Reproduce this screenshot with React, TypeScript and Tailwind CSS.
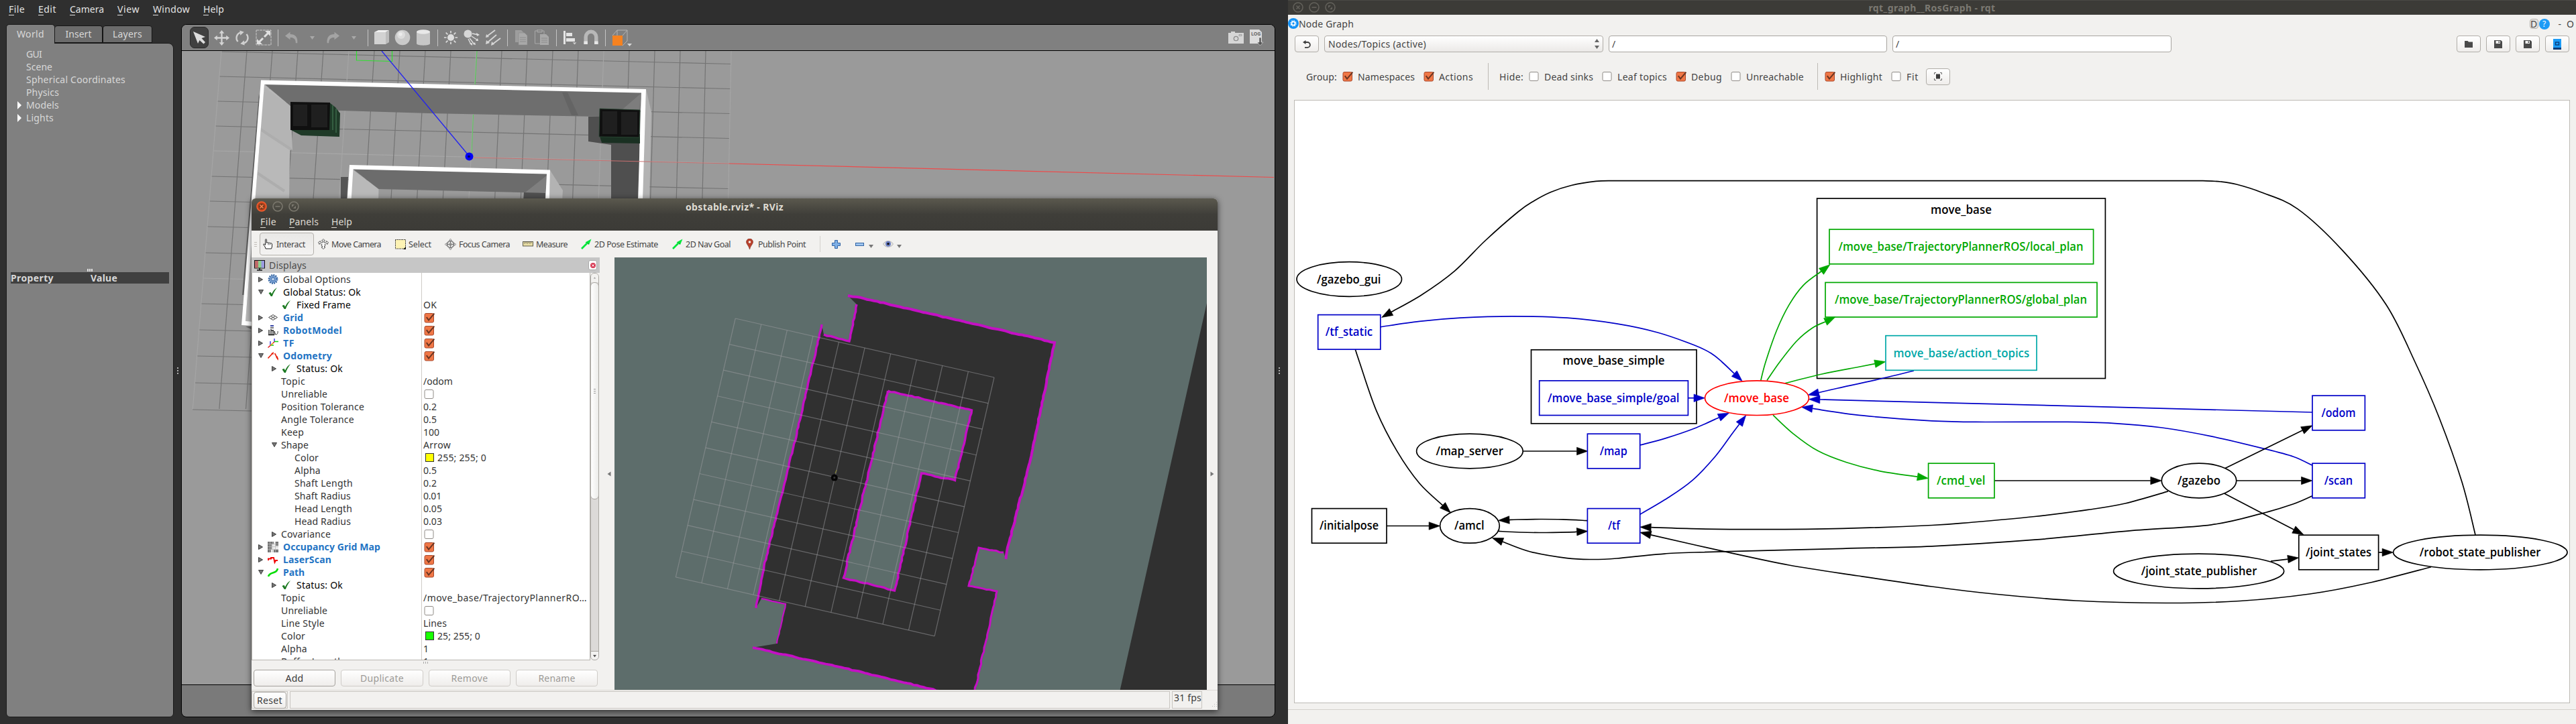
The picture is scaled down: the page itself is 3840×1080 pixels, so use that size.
import { useLayoutEffect, useRef, useState, type ReactNode } from "react";

/* ---------- text helpers ---------- */

/** Single-line label whose tracking is adjusted so that it spans `w` pixels. */
function T({ w, className = "", children }: { w?: number; className?: string; children: string }) {
  const ref = useRef<HTMLSpanElement>(null);
  const [ls, setLs] = useState(0);
  useLayoutEffect(() => {
    if (!w || !ref.current) return;
    const natural = ref.current.getBoundingClientRect().width;
    setLs((w - natural) / children.length);
  }, [w, children]);
  return (
    <span ref={ref} className={"inline-block whitespace-pre " + className} style={w ? { letterSpacing: ls } : undefined}>
      {children}
    </span>
  );
}

function MenuLabel({ w, children }: { w: number; children: string }) {
  return (
    <span className="relative inline-block h-[19px]">
      <T w={w}>{children}</T>
      <span className="absolute bottom-0 left-0 h-px w-2 bg-current" />
    </span>
  );
}

/* ---------- shared widgets ---------- */

function Check({ on, className = "" }: { on?: boolean; className?: string }) {
  return (
    <svg viewBox="0 0 17 16" className={"h-4 w-[17px] shrink-0 " + className}>
      {on ? (
        <>
          <rect x="1" y="1.5" width="13.5" height="13.5" rx="2" fill="#f07746" stroke="#a8492c" />
          <path d="M3.8 7.2 L7 11.6 L15.4 1.6" fill="none" stroke="#6b3522" strokeWidth="2" />
        </>
      ) : (
        <rect x="1" y="1.5" width="13" height="13" rx="2" fill="#fff" stroke="#8f8b86" />
      )}
    </svg>
  );
}

function Caret({ className = "" }: { className?: string }) {
  return (
    <svg viewBox="0 0 7 5" className={"h-[5px] w-[7px] shrink-0 " + className}>
      <path d="M0 0 H7 L3.5 5 Z" fill="currentColor" />
    </svg>
  );
}

/* ---------- Gazebo ---------- */

const rowsLeft = [77, 114, 151, 188, 225, 263, 300, 338, 377, 415, 453, 492, 531, 571, 611];
const cols = Array.from({ length: 21 }, (_, i) => 330 + i * 38);

function GazeboScene() {
  return (
    <svg viewBox="271 76 1629 945" className="block h-[945px] w-[1629px] bg-[#9a9a9a]">
      <g stroke="#7a7a7a" strokeWidth="1.2">
        {rowsLeft.map((y, i) => {
          const x = 330 - (y - 77) * 0.08;
          return <line key={i} x1={x} y1={y} x2={1090 - (y - 77) * 0.02} y2={y + 18.5} stroke={i === 4 || i === 9 ? "#a8a8a8" : "#747474"} />;
        })}
        {cols.map((x, i) => {
          const s = 0.08 - (i / 20) * 0.06;
          return <line key={i} x1={x} y1={76} x2={x - s * 534} y2={610} stroke={i % 5 === 0 ? "#a5a5a5" : "#747474"} />;
        })}
      </g>
      <path d="M531.5 76 V90 L584.5 91.5 V76" fill="none" stroke="#2fe22f" strokeWidth="1.2" />
      <path d="M711 76 L708 126" stroke="#4fd04f" strokeWidth="1" />

      {/* outer room */}
      <path d="M387 145 L384 180 L380 240 L375 330 L371 400 L367 440 L361 440 L386 140 Z" fill="#606060" />
      <path d="M963 133 L971 167 L968 300 L957 300 Z" fill="#b3b3b3" />
      <path d="M394 126 L433 158 L431 300 L375 480 L366 480 Z" fill="#b9b9b9" />
      <path d="M394 130 L388 194 L436 224 L433 158 Z" fill="#b4b4b4" />
      <path d="M387 192 L434 223 M382 257 L424 285" stroke="#adadad" strokeWidth="4" />
      <path d="M394 125 L957 137 L953 176 L893 174 L640 169 L506 165 L433 158 Z" fill="#6e6e6e" />
      <path d="M957 138 L953 164 L928 163 Z" fill="#7d7d7d" />
      <path d="M838 138 L852 172 L862 172 L846 138 Z" fill="#646464" />
      <path d="M877 174 L895 174 L897 213 L911 213 L953 213 L953 300 L911 300 L911 216 L877 211 Z" fill="#4f4f4f" />
      <path d="M389 119.5 L963 133 L958 300 L951 300 L956 138.5 L394 126 L366 479 L377 480 L377 486 L360 485 Z" fill="#fff" />
      <path d="M366 487 H376 V492 Z" fill="#666" />

      {/* inner room */}
      <path d="M508 264 L519 264 L517 300 L508 300 Z" fill="#555" />
      <path d="M820 254 L839 284 L838 300 L819 300 Z" fill="#b3b3b3" />
      <path d="M526 253 L564.5 282 L564 300 L523 300 Z" fill="#b9b9b9" />
      <path d="M526 252 L816 259 L813 288 L564.5 282 Z" fill="#6c6c6c" />
      <path d="M816 261 L813 288 L783 287 Z" fill="#7f7f7f" />
      <path d="M781 287 L813 288 V300 H780 Z" fill="#505050" />
      <path d="M521 246 L820 253.5 L819 300 L813 300 L815 259.5 L526.5 252.5 L523.5 300 L517.5 300 Z" fill="#fff" />

      {/* dumpsters */}
      <path d="M491 153 L500 160 L507 169 L506 204 L449 202 L434 194 Z" fill="#1f3a28" />
      <path d="M496 157 V194 M501 162 V198" stroke="#3c6a4a" strokeWidth="1.5" />
      <path d="M433 152 L492 153 L491 194 L433 194 Z" fill="#101010" />
      <path d="M437 156 H458 V188 H437 Z M464 156 H488 V190 H464 Z" fill="#1f1f1f" />
      <path d="M893 200 L897 213 L954 214 V200 Z" fill="#1a3022" />
      <path d="M894 162 L954 164 L953 205 L893 204 Z" fill="#101010" stroke="#2c4a36" strokeWidth="0.8" />
      <path d="M898 166 H920 V200 H898 Z M926 167 H950 V201 H926 Z" fill="#1f1f1f" />

      {/* axes and marker */}
      <path d="M705.5 171 L703 230" stroke="#5bcc5b" strokeWidth="1" />
      <path d="M706 235 L1087 244" stroke="#c97070" strokeWidth="1" />
      <path d="M1087 244 L1899 264.5" stroke="#ee4a4a" strokeWidth="1.2" />
      <path d="M569 76 L697 230" stroke="#2222f0" strokeWidth="1.3" />
      <ellipse cx="699.5" cy="233.5" rx="6" ry="6" fill="#0000f4" />
      <circle cx="699" cy="233.5" r="1.8" fill="#000060" />
    </svg>
  );
}

function ToolSep({ className = "" }: { className?: string }) {
  return <div className={"h-[25px] w-px shrink-0 bg-[#c4c4c4] " + className} />;
}

function Ico({ className, box = "0 0 24 24", children }: { className: string; box?: string; children: ReactNode }) {
  return (
    <svg viewBox={box} className={"shrink-0 " + className} fill="none">
      {children}
    </svg>
  );
}

function GazeboToolbar() {
  return (
    <div className="flex h-[39px] items-center border-b border-black bg-[#808080] text-[#bdbdbd]">
      <div className="ml-[12px] flex h-8 w-7 shrink-0 items-center justify-center rounded-[7px] border border-[#2a2a2a] bg-[#404040]">
        <Ico className="h-6 w-6">
          <path d="M3 3 L21 11 L15.5 13 L21 19 L18.5 21.5 L12.5 16 L10 21 Z" fill="#dcdcdc" />
        </Ico>
      </div>
      <Ico className="ml-[8px] h-[23px] w-[23px]">
        <path d="M12 0 L16 5 H13.2 V10.8 H19 V8 L24 12 L19 16 V13.2 H13.2 V19 H16 L12 24 L8 19 H10.8 V13.2 H5 V16 L0 12 L5 8 V10.8 H10.8 V5 H8 Z" fill="#d4d4d4" />
      </Ico>
      <Ico className="ml-[8px] h-[23px] w-[22px]">
        <path d="M5 18 A9 9 0 0 1 9 3.5 M19 6 A9 9 0 0 1 15 20.5" stroke="#d0d0d0" strokeWidth="2.6" />
        <path d="M8 0 L15 2.5 L9 8 Z M16 24 L9 21.5 L15 16 Z" fill="#d0d0d0" />
      </Ico>
      <Ico className="ml-[9px] h-[24px] w-[24px]">
        <rect x="1" y="1" width="22" height="22" stroke="#c8c8c8" strokeDasharray="4 1" />
        <path d="M13 11 L20 4 M11 13 L4 20" stroke="#e0e0e0" strokeWidth="3" />
        <path d="M14 2 H22 V10 Z M2 14 V22 H10 Z" fill="#e0e0e0" />
      </Ico>
      <ToolSep className="ml-[9px]" />
      <Ico className="ml-[8px] h-5 w-6">
        <path d="M0 9 L9 2 V6 C18 6 23 11 22 22 H19 C19 14 15 12 9 12 V16 Z" fill="#a4a4a4" />
      </Ico>
      <Caret className="ml-[15px] text-[#a8a8a8]" />
      <Ico className="ml-[15px] h-5 w-6">
        <path d="M24 9 L15 2 V6 C6 6 1 11 2 22 H5 C5 14 9 12 15 12 V16 Z" fill="#a4a4a4" />
      </Ico>
      <Caret className="ml-[16px] text-[#a8a8a8]" />
      <ToolSep className="ml-[17px]" />
      <Ico className="ml-[8px] h-6 w-6">
        <path d="M1 4 L7 1 H23 L18 4 Z" fill="#f0f0f0" />
        <path d="M1 4 H18 V22 H1 Z" fill="#d2d2d2" />
        <path d="M18 4 L23 1 V19 L18 22 Z" fill="#bcbcbc" />
      </Ico>
      <Ico className="ml-[7px] h-6 w-6">
        <circle cx="12" cy="12" r="11.3" fill="#c9c9c9" />
        <circle cx="10" cy="8" r="6" fill="#dcdcdc" />
        <circle cx="9" cy="7" r="2.6" fill="#ececec" />
      </Ico>
      <Ico className="ml-[9px] h-6 w-5" box="0 0 20 24">
        <path d="M0 3 V21 C0 24.500 20 24.500 20 21 V3 Z" fill="#c6c6c6" />
        <ellipse cx="10" cy="3.500" rx="10" ry="3.200" fill="#e8e8e8" />
      </Ico>
      <ToolSep className="ml-[11px]" />
      <Ico className="ml-[8px] h-6 w-[22px]">
        <circle cx="12" cy="12" r="5.500" fill="#dedede" />
        <path d="M12 5 V1 M12 19 V23 M5 12 H1 M19 12 H23 M7 7 L4 4 M17 7 L20 4 M7 17 L4 20 M17 17 L20 20" stroke="#dedede" strokeWidth="1.800" />
      </Ico>
      <Ico className="ml-[8px] h-6 w-6">
        <circle cx="6.500" cy="6.500" r="6" fill="#d6d6d6" />
        <path d="M13 6 L22 8 M12 10 L21 16 M9 13 L16 22 M7 14 L11 22" stroke="#dedede" strokeWidth="1.400" />
        <path d="M19 5 L24 8 L20 10 Z M18 17 L22 17 L21 13 Z M14 22 L18 23 L17 19 Z M9 21 L13 24 L13 20 Z" fill="#dedede" />
      </Ico>
      <Ico className="ml-[8px] h-6 w-6">
        <path d="M15 1 L3 10 M17 8 L3 20 M23 13 L11 22" stroke="#d6d6d6" strokeWidth="1.800" />
        <path d="M1 12 L2 7 L6 11 Z M1 22 L2 16 L7 20 Z M9 24 L10 18 L14 22 Z" fill="#d6d6d6" />
      </Ico>
      <ToolSep className="ml-[9px]" />
      <Ico className="ml-[11px] h-6 w-[19px]" box="0 0 19 24">
        <path d="M0 1 H9 L13 5 V19 H0 Z" fill="#9d9d9d" />
        <path d="M5 5 H14 L18 9 V23 H5 Z" fill="#a9a9a9" stroke="#8a8a8a" strokeWidth="0.600" />
        <path d="M7 12 H16 M7 15 H16 M7 18 H16" stroke="#8c8c8c" />
      </Ico>
      <Ico className="ml-[10px] h-6 w-[22px]" box="0 0 22 24">
        <path d="M0.500 2 H14 V21 H0.500 Z" stroke="#a9a9a9" />
        <path d="M4 0 H11 V4 H4 Z" fill="#8a8a8a" stroke="#a9a9a9" />
        <path d="M8 7 H17 L21 11 V23 H8 Z" fill="#a9a9a9" />
        <path d="M10 13 H19 M10 16 H19 M10 19 H19" stroke="#8c8c8c" />
      </Ico>
      <ToolSep className="ml-[10px]" />
      <Ico className="ml-[10px] h-6 w-[21px]" box="0 0 21 24">
        <path d="M0 2 H3 V22 H0 Z M4 5 H13 V10 H4 Z M4 13 H17 V18 H4 Z" fill="#e4e4e4" />
        <path d="M13 19 H20 L16.500 23 Z" fill="#d0d0d0" stroke="#808080" strokeWidth="0.800" />
      </Ico>
      <Ico className="ml-[9px] h-6 w-[22px]">
        <path d="M3.500 23 V11 A8.500 8.500 0 0 1 20.500 11 V23" stroke="#b8b8b8" strokeWidth="6" />
        <path d="M0.500 18 H6.500 V23 H0.500 Z M17.500 18 H23.500 V23 H17.500 Z" fill="#e6e6e6" />
      </Ico>
      <ToolSep className="ml-[10px]" />
      <Ico className="ml-[9px] h-[25px] w-[30px]" box="0 0 30 25">
        <path d="M8 1 H23 V17 L16 24 M16 9 L23 1 M1 9 L8 1 V9" stroke="#b4b4b4" />
        <rect x="1" y="9" width="15" height="15" fill="#f58220" />
        <path d="M23 21 H30 L26.500 25 Z" fill="#d8d8d8" />
      </Ico>
      <div className="flex-1" />
      <Ico className="h-[18px] w-[23px]" box="0 0 23 18">
        <path d="M0 2 H4 V0 H10 V2 H23 V18 H0 Z" fill="#d6d6d6" />
        <circle cx="11.500" cy="10.500" r="3.200" stroke="#8b8b8b" strokeWidth="1.300" />
        <path d="M16 4.500 H20 V6.500 H16 Z" stroke="#8b8b8b" strokeWidth="0.700" />
      </Ico>
      <div className="relative ml-[9px] mr-[16px] h-6 w-[21px] shrink-0">
        <Ico className="block h-6 w-[21px]" box="0 0 21 24">
          <path d="M0 0 H14 L18 4 V21 H0 Z" fill="#dcdcdc" />
          <path d="M14 12 H17 V19 H20 L15.500 24 L11 19 H14 Z" fill="#555" stroke="#e4e4e4" strokeWidth="0.600" />
        </Ico>
        <span className="absolute left-[2px] top-[3px] text-[7px] font-bold leading-[8px] text-[#666]">LOG</span>
      </div>
    </div>
  );
}

const worldTree: [string, number, boolean][] = [
  ["GUI", 23, false],
  ["Scene", 39, false],
  ["Spherical Coordinates", 148, false],
  ["Physics", 49, false],
  ["Models", 49, true],
  ["Lights", 41, true],
];

function Gazebo() {
  return (
    <div className="relative flex h-[1080px] w-[1920px] shrink-0 flex-col bg-[#2f2f2f] text-[14px] leading-[19px] text-[#d8d8d8]">
      <div className="flex h-9 shrink-0 items-start gap-[20px] pl-[13px] pt-[4px] text-[#e2e2e2]">
        <MenuLabel w={24}>File</MenuLabel>
        <MenuLabel w={27}>Edit</MenuLabel>
        <MenuLabel w={51}>Camera</MenuLabel>
        <MenuLabel w={33}>View</MenuLabel>
        <MenuLabel w={55}>Window</MenuLabel>
        <MenuLabel w={31}>Help</MenuLabel>
      </div>
      <div className="flex h-[1034px] shrink-0">
        <div className="ml-[9px] flex w-[250px] flex-col">
          <div className="flex h-[28px] shrink-0 items-end text-center">
            <div className="relative z-10 -mb-px h-[29px] w-[73px] rounded-t-[5px] border border-b-0 border-[#1a1a1a] bg-[#808080] pt-[4px]">
              <T w={41}>World</T>
            </div>
            <div className="h-[26px] w-[71px] rounded-t-[4px] border border-l-0 border-[#151515] bg-[#6b6b6b] pt-[2px]">
              <T w={39}>Insert</T>
            </div>
            <div className="h-[26px] w-[74px] rounded-t-[4px] border border-[#151515] bg-[#6b6b6b] pt-[2px]">
              <T w={44}>Layers</T>
            </div>
          </div>
          <div className="flex flex-1 flex-col rounded-b-[6px] rounded-tr-[8px] border border-[#1a1a1a] bg-[#808080]">
            <div className="h-[336px] pt-[6px]">
              {worldTree.map(([name, w, open]) => (
                <div key={name} className="flex h-[19px] items-center">
                  <span className="flex w-[29px] items-center pl-[16px]">
                    {open && (
                      <svg viewBox="0 0 6 12" className="h-3 w-1.5">
                        <path d="M0 0 L6 6 L0 12 Z" fill="#fff" />
                      </svg>
                    )}
                  </span>
                  <T w={w}>{name}</T>
                </div>
              ))}
            </div>
            <div className="flex h-[5px] justify-center gap-px">
              <span className="h-1 w-0.5 bg-[#e0e0e0]" />
              <span className="h-1 w-0.5 bg-[#e0e0e0]" />
              <span className="h-1 w-0.5 bg-[#e0e0e0]" />
            </div>
            <div className="mx-[6px] flex h-[17px] items-center bg-[#404040] font-bold">
              <div className="w-[119px]">
                <T w={64}>Property</T>
              </div>
              <T w={40}>Value</T>
            </div>
          </div>
        </div>
        <div className="flex w-[11px] flex-col items-center justify-center gap-[2px]">
          <span className="size-0.5 bg-[#b0b0b0]" />
          <span className="size-0.5 bg-[#b0b0b0]" />
          <span className="size-0.5 bg-[#b0b0b0]" />
        </div>
        <div className="w-[1631px] overflow-hidden rounded-[8px] border border-black bg-[#7a7a7a]">
          <GazeboToolbar />
          <GazeboScene />
          <div className="h-px bg-black" />
        </div>
        <div className="flex w-[11px] flex-col items-center justify-center gap-[2px]">
          <span className="size-0.5 bg-[#b0b0b0]" />
          <span className="size-0.5 bg-[#b0b0b0]" />
          <span className="size-0.5 bg-[#b0b0b0]" />
        </div>
      </div>
      <RViz />
    </div>
  );
}

/* ---------- RViz ---------- */

type Row = {
  n: string;
  w: number;
  lvl?: 0 | 1 | 2;
  arrow?: "r" | "d";
  icon?: string;
  kind?: "blue" | "black";
  v?: string;
  vw?: number;
  check?: boolean;
  color?: string;
};

const rows: Row[] = [
  { n: "Global Options", w: 101, arrow: "r", icon: "gear" },
  { n: "Global Status: Ok", w: 116, arrow: "d", icon: "ok", kind: "black" },
  { n: "Fixed Frame", w: 81, lvl: 1, icon: "ok", kind: "black", v: "OK", vw: 20 },
  { n: "Grid", w: 30, arrow: "r", icon: "grid", kind: "blue", check: true },
  { n: "RobotModel", w: 88, arrow: "r", icon: "robot", kind: "blue", check: true },
  { n: "TF", w: 17, arrow: "r", icon: "tf", kind: "blue", check: true },
  { n: "Odometry", w: 73, arrow: "d", icon: "odo", kind: "blue", check: true },
  { n: "Status: Ok", w: 69, lvl: 1, arrow: "r", icon: "ok", kind: "black" },
  { n: "Topic", w: 36, lvl: 1, v: "/odom", vw: 44 },
  { n: "Unreliable", w: 69, lvl: 1, check: false },
  { n: "Position Tolerance", w: 124, lvl: 1, v: "0.2", vw: 20 },
  { n: "Angle Tolerance", w: 109, lvl: 1, v: "0.5", vw: 20 },
  { n: "Keep", w: 34, lvl: 1, v: "100", vw: 24 },
  { n: "Shape", w: 41, lvl: 1, arrow: "d", v: "Arrow", vw: 41 },
  { n: "Color", w: 36, lvl: 2, v: "255; 255; 0", vw: 73, color: "bg-[#ffff00]" },
  { n: "Alpha", w: 39, lvl: 2, v: "0.5", vw: 20 },
  { n: "Shaft Length", w: 87, lvl: 2, v: "0.2", vw: 20 },
  { n: "Shaft Radius", w: 84, lvl: 2, v: "0.01", vw: 27 },
  { n: "Head Length", w: 86, lvl: 2, v: "0.05", vw: 28 },
  { n: "Head Radius", w: 84, lvl: 2, v: "0.03", vw: 28 },
  { n: "Covariance", w: 74, lvl: 1, arrow: "r", check: false },
  { n: "Occupancy Grid Map", w: 145, arrow: "r", icon: "map", kind: "blue", check: true },
  { n: "LaserScan", w: 72, arrow: "r", icon: "laser", kind: "blue", check: true },
  { n: "Path", w: 32, arrow: "d", icon: "path", kind: "blue", check: true },
  { n: "Status: Ok", w: 69, lvl: 1, arrow: "r", icon: "ok", kind: "black" },
  { n: "Topic", w: 36, lvl: 1, v: "/move_base/TrajectoryPlannerRO…", vw: 244 },
  { n: "Unreliable", w: 69, lvl: 1, check: false },
  { n: "Line Style", w: 65, lvl: 1, v: "Lines", vw: 35 },
  { n: "Color", w: 36, lvl: 1, v: "25; 255; 0", vw: 64, color: "bg-[#19ff00]" },
  { n: "Alpha", w: 39, lvl: 1, v: "1", vw: 7 },
  { n: "Buffer Length", w: 93, lvl: 1, v: "1", vw: 7 },
];

function RowIcon({ kind }: { kind: string }) {
  const c = "h-4 w-4 shrink-0";
  switch (kind) {
    case "gear":
      return (
        <Ico className={c} box="0 0 16 16">
          <circle cx="8" cy="7.500" r="6.200" stroke="#3465a4" strokeWidth="2.400" strokeDasharray="2 1.200" />
          <circle cx="8" cy="7.500" r="5.200" fill="#7ba3d6" stroke="#3465a4" strokeWidth="0.700" />
          <circle cx="8" cy="7.500" r="2.600" stroke="#3465a4" strokeWidth="1" fill="#b4cdea" />
        </Ico>
      );
    case "ok":
      return (
        <Ico className={c} box="0 0 16 16">
          <path d="M1.500 9 L4.500 7.800 L6 10.500 C8 6 10.500 3 14 1 C11 5 8.500 9 6.800 14 H4.800 Z" fill="#1c7a22" />
        </Ico>
      );
    case "grid":
      return (
        <Ico className={c} box="0 0 16 16">
          <path d="M1.500 7.500 L8 3.500 L14.500 7.500 L8 11.500 Z M4.700 5.500 L11.300 9.500 M11.300 5.500 L4.700 9.500" stroke="#444" strokeWidth="1" />
        </Ico>
      );
    case "robot":
      return (
        <Ico className={c} box="0 0 16 16">
          <rect x="4" y="0" width="5" height="2" fill="#3a49a8" />
          <rect x="4" y="3" width="5" height="2" fill="#777" />
          <path d="M2 7 V14 M5 6 V15 M8 7 V15 M10 9 L11 14 M5 8 H9" stroke="#333" strokeWidth="1.500" />
          <path d="M11 13 C13 16 16 12 15 9" stroke="#333" strokeWidth="1" />
          <path d="M1 14.500 H10" stroke="#111" strokeWidth="1.500" />
        </Ico>
      );
    case "tf":
      return (
        <Ico className={c} box="0 0 16 16">
          <path d="M10 6 V1 M4 11 V5" stroke="#2020e0" strokeWidth="1.300" />
          <path d="M10 5.500 H16 M4 11 H9" stroke="#10d010" strokeWidth="1.300" />
          <path d="M10 6 L0.500 14.500" stroke="#e01010" strokeWidth="1.300" />
          <path d="M4 11 L8 8" stroke="#e8c020" strokeWidth="1.200" />
        </Ico>
      );
    case "odo":
      return (
        <Ico className={c} box="0 0 16 16">
          <path d="M0.500 11.500 L7 4.500 M10.500 4 L15.500 13" stroke="#e8220c" strokeWidth="1.600" />
          <path d="M9 2 L8.500 6 L5 4.200 Z M15.800 15 L12 9.500 L15 8.500 Z" fill="#e8220c" />
        </Ico>
      );
    case "map":
      return (
        <Ico className={c} box="0 0 16 16">
          <rect width="16" height="16" fill="#eee" />
          <path d="M0 0 H9 V4 H6 V12 H5 V16 H0 Z M12 0 H16 V6 H12 Z M9 12 H16 V16 H9 Z" fill="#777" />
          <path d="M0 3.500 H16 M0 7.500 H16 M0 11.500 H16 M3.500 0 V16 M7.500 0 V16 M11.500 0 V16" stroke="#b8b8b8" strokeWidth="0.700" />
        </Ico>
      );
    case "laser":
      return (
        <Ico className={c} box="0 0 16 16">
          <path d="M1 9 V6.500 H5 V5 H9 L10.500 12 L12 9 H15" stroke="#f00000" strokeWidth="1.900" />
        </Ico>
      );
    default:
      return (
        <Ico className={c} box="0 0 16 16">
          <path d="M1 14 C3 6 13 11 15 2" stroke="#08dd08" strokeWidth="2.600" />
        </Ico>
      );
  }
}

function TreeRow({ r }: { r: Row }) {
  const pad = r.lvl === 2 ? "pl-[49px]" : r.lvl === 1 ? "pl-[29px]" : "pl-[9px]";
  const tone = r.kind === "blue" ? "font-bold text-[#1f74c4]" : r.kind === "black" ? "text-black" : "text-[#333]";
  return (
    <div className="flex h-[19px] shrink-0 items-center">
      <div className={"flex w-[252px] shrink-0 items-center " + pad}>
        <span className="flex w-[14px] shrink-0">
          {r.arrow === "r" && (
            <Ico className="h-2 w-[7px]" box="0 0 7 8">
              <path d="M0.500 0.500 L6.500 4 L0.500 7.500 Z" fill="#777" stroke="#3c3c3c" />
            </Ico>
          )}
          {r.arrow === "d" && (
            <Ico className="h-[7px] w-2" box="0 0 8 7">
              <path d="M0.500 0.500 H7.500 L4 6.500 Z" fill="#777" stroke="#3c3c3c" />
            </Ico>
          )}
        </span>
        {r.icon && (
          <span className="mr-[7px] flex shrink-0">
            <RowIcon kind={r.icon} />
          </span>
        )}
        <T w={r.w} className={tone}>
          {r.n}
        </T>
      </div>
      <div className="flex h-full w-[252px] items-center pl-[3px] text-[#333]">
        {r.check !== undefined && <Check on={r.check} className="ml-px" />}
        {r.color && <span className={"ml-[3px] mr-[5px] size-[13px] border border-[#333] " + r.color} />}
        {r.v && <T w={r.vw}>{r.v}</T>}
      </div>
    </div>
  );
}

function RvBtn({ children, w, className = "" }: { children: string; w: number; className?: string }) {
  return (
    <div className={"flex h-[25px] items-center justify-center rounded-[4px] border bg-linear-to-b from-white to-[#efedeb] " + className}>
      <T w={w}>{children}</T>
    </div>
  );
}

/** Roughens a polyline the way rasterised range readings look. */
function rough(points: number[][], amp: number) {
  let seed = 7;
  const rnd = () => {
    seed = (seed * 16807) % 2147483647;
    return seed / 2147483647 - 0.5;
  };
  const out: string[] = [];
  points.forEach((p, i) => {
    const q = points[i + 1];
    out.push(p[0] + " " + p[1]);
    if (!q) return;
    const len = Math.hypot(q[0] - p[0], q[1] - p[1]);
    const n = Math.floor(len / 5);
    for (let k = 1; k < n; k++) {
      const t = k / n;
      out.push((p[0] + (q[0] - p[0]) * t + rnd() * amp).toFixed(1) + " " + (p[1] + (q[1] - p[1]) * t + rnd() * amp).toFixed(1));
    }
  });
  return "M" + out.join(" L");
}

const right = [[1264, 441], [1278, 443], [1572, 511], [1535, 690], [1501, 822], [1499.5, 834]];
const notchR = [[1496, 824], [1459, 817], [1444, 874], [1486, 882], [1453, 1031]];
const bottomWall = [[1401, 1031], [1260, 997], [1122, 966]];
const notchBL = [[1158, 960], [1171, 901], [1135, 893]];
const leftWall = [[1127, 907], [1139, 844], [1190, 637], [1225, 484]];
const notchTL = [[1228, 499], [1266, 509], [1277, 454]];
const hole = [[1323.5, 583], [1448.5, 612], [1423.5, 716.5], [1373.5, 706], [1333.5, 881], [1257.5, 862], [1323.5, 583]];

function MapView() {
  const a = [1096.2, 475], b = [1482, 563], c = [1007.3, 860.8];
  const u = [(b[0] - a[0]) / 10, (b[1] - a[1]) / 10];
  const v = [(c[0] - a[0]) / 10, (c[1] - a[1]) / 10];
  const floor = [...right, ...notchR, ...bottomWall, ...notchBL, ...leftWall, ...notchTL];
  return (
    <svg viewBox="916 384 883 645" className="block h-[645px] w-[883px] shrink-0 bg-[#5d6d6b]">
      <path d="M1799 452 L1669.700 1029 H1799 Z" fill="#303030" />
      <path d={"M" + floor.map((p) => p.join(" ")).join(" L") + " Z M" + hole.map((p) => p.join(" ")).join(" L") + " Z"} fill="#303030" fillRule="evenodd" />
      <g fill="none" stroke="#c410c4" strokeWidth="3">
        <path d={rough(right, 1.2)} strokeWidth="4" />
        <path d={rough(notchR, 1.6)} strokeWidth="3" />
        <path d={rough(bottomWall, 1.4)} strokeWidth="3.800" />
        <path d={rough(notchBL, 1.2)} strokeWidth="2.200" />
        <path d={rough(leftWall, 1.3)} strokeWidth="3.400" />
        <path d={rough(notchTL, 1.4)} strokeWidth="3.400" />
        <path d={rough(hole, 1.6)} strokeWidth="3.400" />
      </g>
      <g stroke="#a0a0a4" strokeOpacity="0.5" strokeWidth="1.200">
        {Array.from({ length: 11 }, (_, i) => (
          <g key={i}>
            <line x1={a[0] + u[0] * i} y1={a[1] + u[1] * i} x2={c[0] + u[0] * i} y2={c[1] + u[1] * i} />
            <line x1={a[0] + v[0] * i} y1={a[1] + v[1] * i} x2={b[0] + v[0] * i} y2={b[1] + v[1] * i} />
          </g>
        ))}
      </g>
      <path d="M1245 706 L1247 701" stroke="#8a8a30" />
      <circle cx="1243.800" cy="712.600" r="5" fill="#050505" />
      <circle cx="1243.800" cy="712.600" r="1.500" fill="#3a3a3a" />
    </svg>
  );
}

function GreenArrow({ className }: { className: string }) {
  return (
    <Ico className={className} box="0 0 16 16">
      <path d="M1 15 L9 7" stroke="#00e83a" strokeWidth="2.600" />
      <path d="M15.500 0.500 L12 9 L6.500 5.500 Z" fill="#00e83a" />
      <path d="M8 5 L11 8.500 L12 8 L7.500 4.500 Z" fill="#0a8a26" />
    </Ico>
  );
}

function RVizToolbar() {
  return (
    <div className="flex h-10 shrink-0 items-center bg-[#f2f1ef] text-[12.5px] text-[#444]">
      <div className="ml-[4px] flex w-[4px] flex-col gap-[2px]">
        <span className="h-px bg-[#c0bdb8]" />
        <span className="h-px bg-[#c0bdb8]" />
        <span className="h-px bg-[#c0bdb8]" />
      </div>
      <div className="ml-[4px] flex h-[34px] w-[81px] items-center rounded-[4px] border border-[#b3b0ab] bg-linear-to-b from-[#e9e8e6] to-[#f4f3f2] pl-[4px]">
        <Ico className="mr-[4px] h-4 w-4" box="0 0 16 16">
          <path d="M4 15 L3 12 L0.800 9 C0.500 7.500 2 7.500 3.500 9.500 V1.800 C3.500 0.300 5.500 0.300 5.500 1.800 V6.500 C6 5.300 8 5.500 8 6.700 C8.500 5.700 10.500 6 10.500 7.200 C11 6.300 13 6.500 13.500 8 V12 L12.500 15 Z" fill="#fff" stroke="#222" />
          <path d="M8 7 V9.500 M10.500 7.500 V9.500" stroke="#222" strokeWidth="0.800" />
        </Ico>
        <T w={43}>Interact</T>
      </div>
      <Ico className="ml-[6px] mr-[4px] h-4 w-4" box="0 0 16 16">
        <path d="M8 0.500 L10.500 3 H9 V6 L13 5 L12.500 3.500 L15.500 5.500 L14 8.500 L13.500 7 L10 8.500 L11 11 H9.500 V13 H11 L8 15.500 L5 13 H6.500 V11 H5 L6 8.500 L2.500 7 L2 8.500 L0.500 5.500 L3.500 3.500 L3 5 L7 6 V3 H5.500 Z" fill="#fafafa" stroke="#555" strokeWidth="0.900" />
      </Ico>
      <div className="w-[95px]"><T w={74}>Move Camera</T></div>
      <Ico className="mr-[4px] h-[15px] w-4" box="0 0 16 15">
        <rect x="0.500" y="0.500" width="15" height="13.500" fill="#fdf3b4" stroke="#222" strokeDasharray="1.500 1" />
        <path d="M12 15 H16 V11 Z" fill="#111" />
      </Ico>
      <div className="w-[54px]"><T w={34}>Select</T></div>
      <Ico className="mr-[4px] h-[17px] w-[17px]" box="0 0 17 17">
        <circle cx="8.500" cy="8.500" r="5" stroke="#777" strokeWidth="1.500" />
        <circle cx="8.500" cy="8.500" r="2.200" stroke="#999" strokeWidth="1" />
        <path d="M8.500 0 L10.500 3 H6.500 Z M8.500 17 L10.500 14 H6.500 Z M0 8.500 L3 6.500 V10.500 Z M17 8.500 L14 6.500 V10.500 Z" fill="#eee" stroke="#777" strokeWidth="0.700" />
        <path d="M8.500 4 V13 M4 8.500 H13" stroke="#777" />
      </Ico>
      <div className="w-[95px]"><T w={76}>Focus Camera</T></div>
      <Ico className="mr-[4px] h-2 w-4" box="0 0 16 8">
        <rect x="0.500" y="0.500" width="15" height="6.500" fill="#eadfa6" stroke="#5c5a4a" />
        <path d="M3 1 V4 M5 1 V3 M7 1 V4 M9 1 V3 M11 1 V4 M13 1 V3" stroke="#5c5a4a" strokeWidth="0.700" />
      </Ico>
      <div className="w-[67px]"><T w={47}>Measure</T></div>
      <GreenArrow className="mr-[4px] h-4 w-4" />
      <div className="w-[116px]"><T w={95}>2D Pose Estimate</T></div>
      <GreenArrow className="mr-[4px] h-4 w-4" />
      <div className="w-[90px]"><T w={67}>2D Nav Goal</T></div>
      <Ico className="mr-[7px] h-4 w-[11px]" box="0 0 11 16">
        <path d="M5.500 16 C4.500 11 0.500 8 0.500 5 A5 5 0 0 1 10.500 5 C10.500 8 6.500 11 5.500 16 Z" fill="#b9402c" stroke="#7a2a1c" strokeWidth="0.600" />
        <circle cx="5.500" cy="5" r="1.800" fill="#f6f0ea" />
      </Ico>
      <div className="w-[92px]"><T w={71}>Publish Point</T></div>
      <div className="h-6 w-px bg-[#d4d1cc]" />
      <Ico className="ml-[17px] h-[13px] w-[13px]" box="0 0 13 13">
        <path d="M4.500 0.500 H8.500 V4.500 H12.500 V8.500 H8.500 V12.500 H4.500 V8.500 H0.500 V4.500 H4.500 Z" fill="#7fb0e6" stroke="#3465a4" />
      </Ico>
      <Ico className="ml-[22px] h-[5px] w-[13px]" box="0 0 13 5">
        <rect x="0.500" y="0.500" width="12" height="4" fill="#9ec4ee" stroke="#3465a4" />
      </Ico>
      <Caret className="ml-[7px] mt-[7px] text-[#777]" />
      <Ico className="ml-[14px] h-[12px] w-4" box="0 0 16 12">
        <path d="M0.500 6 C4 0 12 0 15.500 6 C12 12 4 12 0.500 6 Z" fill="#e4e4e2" stroke="#aaa" strokeWidth="0.800" />
        <circle cx="8" cy="5.800" r="4" fill="#6c7fc4" />
        <circle cx="8" cy="5.800" r="1.800" fill="#111" />
      </Ico>
      <Caret className="ml-[5px] mt-[7px] text-[#777]" />
    </div>
  );
}

function WinButton({ glyph, close, dim }: { glyph: "x" | "-" | "m"; close?: boolean; dim?: boolean }) {
  const s = close ? "#f0602f" : dim ? "#63615b" : "#7b786e";
  return (
    <Ico className="size-4" box="0 0 16 16">
      <circle cx="8" cy="8" r="7" stroke={s} strokeWidth="1.600" fill={close ? "#c8421d" : "none"} />
      {close && <circle cx="8" cy="8" r="4.600" fill="#7a3a1a" />}
      {glyph === "x" && <path d="M5.500 5.500 L10.500 10.500 M10.500 5.500 L5.500 10.500" stroke={close ? "#f5824f" : s} strokeWidth="1.600" />}
      {glyph === "-" && <path d="M4.500 8 H11.500" stroke={s} strokeWidth="1.600" />}
      {glyph === "m" && <path d="M5 5 H9 L5 9 Z M11 11 H7 L11 7 Z" fill={s} />}
    </Ico>
  );
}

function RViz() {
  return (
    <div className="absolute left-[375px] top-[296px] flex h-[763px] w-[1440px] flex-col overflow-hidden rounded-t-[6px] bg-[#f2f1ef] shadow-[0_2px_10px_rgba(0,0,0,0.65)]">
      <div className="h-12 shrink-0 bg-linear-to-b from-[#5b594e] via-[#3f3e39] via-50% to-[#3c3b37] text-[#dfdbd2]">
        <div className="relative flex h-6 items-center justify-center">
          <div className="absolute left-[7px] top-[4px] flex gap-2">
            <WinButton glyph="x" close />
            <WinButton glyph="-" />
            <WinButton glyph="m" />
          </div>
          <T w={146} className="font-bold">obstable.rviz* - RViz</T>
        </div>
        <div className="flex items-start gap-[19px] pl-[13px] pt-px">
          <MenuLabel w={24}>File</MenuLabel>
          <MenuLabel w={44}>Panels</MenuLabel>
          <MenuLabel w={31}>Help</MenuLabel>
        </div>
      </div>
      <RVizToolbar />
      <div className="flex h-[645px] shrink-0">
        <div className="flex w-[519px] shrink-0 flex-col text-[#4c4c4c]">
          <div className="flex h-[23px] shrink-0 items-center bg-[#c6c6c6] pl-[4px] pr-[4px]">
            <Ico className="mr-[6px] h-4 w-4" box="0 0 16 16">
              <rect x="0.500" y="0.500" width="15" height="11.500" fill="#8ed08e" stroke="#111" />
              <rect x="1" y="1" width="5" height="10.500" fill="#c06a6a" />
              <rect x="10.500" y="1" width="4.500" height="10.500" fill="#9a9ae0" />
              <path d="M8 12 V14.500 M4 15 H12" stroke="#111" strokeWidth="1.500" />
            </Ico>
            <T w={56}>Displays</T>
            <span className="ml-auto flex h-[15px] w-[13px] items-center justify-center rounded-[3px] border border-[#aaa] bg-white">
              <Ico className="h-2 w-2" box="0 0 8 8">
                <circle cx="4" cy="4" r="4" fill="#d8405a" />
                <path d="M2.500 2.500 L5.500 5.500 M5.500 2.500 L2.500 5.500" stroke="#fff" />
              </Ico>
            </span>
          </div>
          <div className="flex h-[578px] shrink-0">
            <div className="relative h-full w-[505px] overflow-hidden border border-t-0 border-[#b8b5b0] bg-white">
              {rows.map((r, i) => (
                <TreeRow key={i} r={r} />
              ))}
              <span className="absolute left-[252px] top-0 h-full w-px bg-[#cfccc8]" />
            </div>
            <div className="flex w-[13px] flex-col overflow-hidden rounded-[6px] border border-[#aaa7a2] bg-[#dcdad8]">
              <div className="flex h-[13px] shrink-0 items-center justify-center bg-[#f2f1ef]">
                <Caret className="rotate-180 scale-50 text-[#999]" />
              </div>
              <div className="-mx-px flex h-[324px] shrink-0 flex-col items-center justify-center gap-[2px] rounded-[6px] border border-[#aaa7a2] bg-linear-to-r from-white to-[#ececea]">
                <span className="h-px w-[3px] bg-[#999]" />
                <span className="h-px w-[3px] bg-[#999]" />
                <span className="h-px w-[3px] bg-[#999]" />
              </div>
              <div className="mt-auto flex h-[13px] shrink-0 items-center justify-center border-t border-[#aaa7a2] bg-[#f4f3f1]">
                <Caret className="scale-75 text-[#555]" />
              </div>
            </div>
          </div>
          <div className="flex h-[14px] shrink-0 justify-center gap-[2px] pt-[2px]">
            <span className="h-[3px] w-px bg-[#aaa]" />
            <span className="h-[3px] w-px bg-[#aaa]" />
            <span className="h-[3px] w-px bg-[#aaa]" />
          </div>
          <div className="flex gap-[8px] pl-[3px]">
            <RvBtn w={27} className="w-[122px] border-[#a5a29d] text-[#3c3c3c]">Add</RvBtn>
            <RvBtn w={65} className="w-[123px] border-[#cfccc8] text-[#9c9a97]">Duplicate</RvBtn>
            <RvBtn w={55} className="w-[122px] border-[#cfccc8] text-[#9c9a97]">Remove</RvBtn>
            <RvBtn w={55} className="w-[122px] border-[#cfccc8] text-[#9c9a97]">Rename</RvBtn>
          </div>
        </div>
        <div className="flex w-[22px] items-center justify-end pr-[5px]">
          <Ico className="h-2 w-1.5" box="0 0 6 8">
            <path d="M5.500 0.500 V7.500 L0.500 4 Z" fill="#777" />
          </Ico>
        </div>
        <MapView />
        <div className="flex w-4 items-center justify-center">
          <Ico className="h-2 w-1.5" box="0 0 6 8">
            <path d="M0.500 0.500 V7.500 L5.500 4 Z" fill="#777" />
          </Ico>
        </div>
      </div>
      <div className="flex flex-1 gap-[3px] border-t border-[#dcdad6] pt-[1px] text-[#3c3c3c]">
        <div className="flex h-[26px] w-[54px] items-center justify-center border border-[#c9c6c1]">
          <RvBtn w={38} className="h-[23px] w-[49px] border-[#a5a29d]">Reset</RvBtn>
        </div>
        <div className="h-[26px] w-[1312px] border border-[#c9c6c1]" />
        <div className="h-[26px] w-[45px] border border-[#c9c6c1] pl-[2px] text-[14px] leading-[18px]">
          <T w={41}>31 fps</T>
        </div>
        <Ico className="ml-auto mt-[16px] h-2.5 w-3" box="0 0 12 10">
          <path d="M10 0 h1 v1 h-1 z M7 3 h1 v1 h-1 z M10 3 h1 v1 h-1 z M4 6 h1 v1 h-1 z M7 6 h1 v1 h-1 z M10 6 h1 v1 h-1 z" fill="#bbb" />
        </Ico>
      </div>
    </div>
  );
}

/* ---------- rqt_graph ---------- */

const K = "#000000", B = "#0000c8", G = "#00a800", C = "#00a8a8", R = "#ff0000";

type Node = { s: "e" | "r"; x1: number; x2: number; y: number; c: string; t: string; tx: number; tw: number };
const nodes: Node[] = [
  { s: "e", x1: 1933, x2: 2089.5, y: 416.5, c: K, t: "/gazebo_gui", tx: 1963, tw: 95.5 },
  { s: "r", x1: 1964.7, x2: 2057.8, y: 495.4, c: B, t: "/tf_static", tx: 1975.7, tw: 70.5 },
  { s: "r", x1: 1955.5, x2: 2067, y: 784.4, c: K, t: "/initialpose", tx: 1967, tw: 88 },
  { s: "e", x1: 2146.6, x2: 2235.3, y: 784.4, c: K, t: "/amcl", tx: 2168, tw: 44.5 },
  { s: "e", x1: 2111.6, x2: 2270.2, y: 673, c: K, t: "/map_server", tx: 2140.4, tw: 100.5 },
  { s: "r", x1: 2366.4, x2: 2444.7, y: 673, c: B, t: "/map", tx: 2384.7, tw: 41 },
  { s: "r", x1: 2366.4, x2: 2444.7, y: 784.4, c: B, t: "/tf", tx: 2397, tw: 18 },
  { s: "r", x1: 2294.7, x2: 2516.4, y: 593.7, c: B, t: "/move_base_simple/goal", tx: 2307, tw: 196.5 },
  { s: "e", x1: 2541.5, x2: 2696.4, y: 593.7, c: R, t: "/move_base", tx: 2570, tw: 97 },
  { s: "r", x1: 2727, x2: 3120.6, y: 368, c: G, t: "/move_base/TrajectoryPlannerROS/local_plan", tx: 2740.5, tw: 365 },
  { s: "r", x1: 2721, x2: 3126, y: 447.2, c: G, t: "/move_base/TrajectoryPlannerROS/global_plan", tx: 2735, tw: 376 },
  { s: "r", x1: 2811, x2: 3036, y: 526.5, c: C, t: "move_base/action_topics", tx: 2822.6, tw: 202.5 },
  { s: "r", x1: 2874.6, x2: 2973, y: 717, c: G, t: "/cmd_vel", tx: 2887, tw: 72.6 },
  { s: "e", x1: 3222.3, x2: 3333.7, y: 717, c: K, t: "/gazebo", tx: 3246, tw: 64 },
  { s: "r", x1: 3447, x2: 3525.4, y: 616, c: B, t: "/odom", tx: 3460.5, tw: 51 },
  { s: "r", x1: 3447, x2: 3525.4, y: 717, c: B, t: "/scan", tx: 3464.7, tw: 42.5 },
  { s: "r", x1: 3426.8, x2: 3545.6, y: 824, c: K, t: "/joint_states", tx: 3437, tw: 98 },
  { s: "e", x1: 3150.6, x2: 3404.7, y: 852, c: K, t: "/joint_state_publisher", tx: 3191.7, tw: 172.6 },
  { s: "e", x1: 3567.6, x2: 3827, y: 824, c: K, t: "/robot_state_publisher", tx: 3606.8, tw: 180.6 },
];

type Edge = { c: string; p: number[][]; open?: boolean };
const edges: Edge[] = [
  { c: K, open: true, p: [[3690, 798], [3670, 719], [3636, 623], [3600, 540], [3557, 454.5], [3492, 373.6], [3425, 311.6], [3370, 286.5], [3334, 275], [3310, 271], [3284, 269.6]] },
  { c: K, open: true, p: [[3284, 269.6], [2404, 269.6]] },
  { c: K, p: [[2404, 269.6], [2379, 270.4], [2342.5, 276.5], [2312, 286.5], [2287, 299.5], [2263, 316], [2214, 359], [2168, 404.6], [2119, 440], [2059.6, 473.5]] },
  { c: B, p: [[2057.8, 487.7], [2116, 479.4], [2177, 474.2], [2253.7, 471.8], [2336, 474.2], [2410, 482.9], [2471, 496], [2526, 515], [2550.7, 527], [2567, 540], [2597.2, 568.6]] },
  { c: K, p: [[2020.4, 521.4], [2026.5, 540], [2051.6, 612.3], [2082.3, 672.6], [2116, 721], [2162.5, 765]] },
  { c: K, p: [[2067, 784.5], [2146.6, 784.5]] },
  { c: K, p: [[2366.4, 776.6], [2330, 774.9], [2296.6, 774.5], [2262, 775], [2233.5, 776.3]] },
  { c: K, p: [[2233.5, 792.4], [2265, 794], [2296.6, 794.5], [2340, 793.8], [2367, 792.4]] },
  { c: K, p: [[2270.2, 673], [2367, 673]] },
  { c: B, p: [[2444.7, 664], [2483.3, 653.6], [2526, 639], [2577.6, 616]] },
  { c: B, p: [[2444.7, 767.3], [2486.4, 742.5], [2523, 716.3], [2556.8, 681], [2581.3, 648], [2602.7, 619.6]] },
  { c: B, p: [[2516.4, 593.7], [2541.5, 593.7]] },
  { c: K, p: [[3232, 732.9], [3167.8, 751], [3112.7, 760.4], [3033, 770.5], [2941, 779], [2880, 783.5], [2746.6, 788.4], [2624, 789.7], [2532, 788.9], [2444.7, 786.2]] },
  { c: K, p: [[3447, 739.8], [3418.8, 751.8], [3373, 765.6], [3296.4, 782.8], [3174, 791.8], [3033, 805.2], [2880, 814.8], [2746.6, 818.3], [2526, 824], [2471, 826.9], [2410, 833], [2373, 834.5], [2336, 832.7], [2281, 823], [2224.3, 802.4]] },
  { c: K, p: [[3624, 845.8], [3529, 870], [3443.3, 886], [3339, 896.5], [3229, 899.5], [3094, 896], [2972, 886], [2880, 875], [2770, 859], [2667, 843], [2569, 822.4], [2444.7, 794.2]] },
  { c: G, p: [[2624.8, 567.5], [2632, 540], [2648.6, 492.5], [2667, 454.6], [2688.4, 425.3], [2728, 394.7]] },
  { c: G, p: [[2634, 567.5], [2653, 540], [2679, 508], [2702, 489], [2736, 472.8]] },
  { c: G, p: [[2661, 571.7], [2716, 558], [2770, 547.5], [2811, 539.5]] },
  { c: B, p: [[2853, 553], [2795.6, 566.9], [2740, 579], [2695, 589.3]] },
  { c: B, p: [[3447, 615], [2880, 600.3], [2696.4, 595.6]] },
  { c: B, p: [[3447, 694.3], [3418.8, 681.2], [3373, 668.8], [3296.4, 650.9], [3223, 638], [3149.4, 631.3], [3082, 629.3], [2959.6, 629.5], [2880, 627.8], [2777, 619.9], [2685.4, 607.2]] },
  { c: G, p: [[2643, 619.2], [2673, 646.8], [2710, 672.6], [2752.7, 689.8], [2801.7, 702.6], [2874.6, 713.6]] },
  { c: K, p: [[2973, 717], [3222.3, 717]] },
  { c: K, p: [[3333.7, 717], [3447, 717]] },
  { c: K, p: [[3317, 698.4], [3447, 634.7]] },
  { c: K, p: [[3316, 736.3], [3434, 797.6]] },
  { c: K, p: [[3385, 837.2], [3426.8, 832]] },
  { c: K, p: [[3545.6, 824], [3567.6, 824]] },
];

/** Catmull-Rom spline through the given points, as cubic segments. */
function spline(p: number[][]) {
  let d = "M" + p[0].join(" ");
  for (let i = 0; i < p.length - 1; i++) {
    const a = p[i - 1] ?? p[i], b = p[i], c = p[i + 1], e = p[i + 2] ?? c;
    d += ` C${b[0] + (c[0] - a[0]) / 6} ${b[1] + (c[1] - a[1]) / 6} ${c[0] - (e[0] - b[0]) / 6} ${c[1] - (e[1] - b[1]) / 6} ${c[0]} ${c[1]}`;
  }
  return d;
}

function EdgeShape({ e }: { e: Edge }) {
  const pts = e.p.map((q) => [...q]);
  const tip = pts[pts.length - 1];
  const prev = pts[pts.length - 2];
  if (e.open) return <path d={spline(pts)} fill="none" stroke={e.c} strokeWidth="1.700" />;
  const len = Math.hypot(tip[0] - prev[0], tip[1] - prev[1]);
  const ux = (tip[0] - prev[0]) / len, uy = (tip[1] - prev[1]) / len;
  const bx = tip[0] - ux * 16.5, by = tip[1] - uy * 16.5;
  pts[pts.length - 1] = [bx, by];
  return (
    <g>
      <path d={spline(pts)} fill="none" stroke={e.c} strokeWidth="1.700" />
      <path d={`M${tip[0]} ${tip[1]} L${bx - uy * 5.8} ${by + ux * 5.8} L${bx + uy * 5.8} ${by - ux * 5.8} Z`} fill={e.c} stroke={e.c} strokeWidth="0.600" />
    </g>
  );
}

function GLabel({ x, y, w, c, children }: { x: number; y: number; w: number; c: string; children: string }) {
  return (
    <text x={x} y={y} textLength={w} lengthAdjust="spacingAndGlyphs" fill={c} className="text-[17.5px] font-semibold">
      {children}
    </text>
  );
}

function Graph() {
  return (
    <svg viewBox="1930 150 1900 898" className="block h-[898px] w-[1900px] bg-white font-['Open_Sans','Noto_Sans',sans-serif]">
      <rect x="2282.500" y="521.800" width="246.500" height="110" fill="none" stroke={K} strokeWidth="1.700" />
      <rect x="2708.600" y="296" width="429.800" height="268.500" fill="none" stroke={K} strokeWidth="1.700" />
      <GLabel x={2329.6} y={543.5} w={152} c={K}>move_base_simple</GLabel>
      <GLabel x={2878} y={318.500} w={91} c={K}>move_base</GLabel>
      {edges.map((e, i) => (
        <EdgeShape key={i} e={e} />
      ))}
      {nodes.map((n) => (
        <g key={n.t}>
          {n.s === "e" ? (
            <ellipse cx={(n.x1 + n.x2) / 2} cy={n.y} rx={(n.x2 - n.x1) / 2} ry={25.8} fill="none" stroke={n.c} strokeWidth="1.700" />
          ) : (
            <rect x={n.x1} y={n.y - 25.8} width={n.x2 - n.x1} height={51.6} fill="none" stroke={n.c} strokeWidth="1.700" />
          )}
          <GLabel x={n.tx} y={n.y + 6} w={n.tw} c={n.c}>{n.t}</GLabel>
        </g>
      ))}
    </svg>
  );
}

function RqtBtn({ children, className = "" }: { children: ReactNode; className?: string }) {
  return (
    <div className={"flex h-[25px] w-9 shrink-0 items-center justify-center rounded-[4px] border border-[#b0ada8] bg-linear-to-b from-white to-[#efedeb] " + className}>
      {children}
    </div>
  );
}

function Floppy() {
  return (
    <Ico className="h-3 w-3" box="0 0 12 12">
      <path d="M0 0 H10 L12 2 V12 H0 Z" fill="#4a4a4a" />
      <path d="M2.500 1 H9 V5 H2.500 Z" fill="#f4f4f4" />
      <path d="M6.500 1.500 H8 V4 H6.500 Z" fill="#4a4a4a" />
    </Ico>
  );
}

function Opt({ on, cell, w, children }: { on?: boolean; cell: string; w: number; children: string }) {
  return (
    <div className={"flex shrink-0 items-center " + cell}>
      <Check on={on} className="mr-[6px]" />
      <T w={w}>{children}</T>
    </div>
  );
}

function Rqt() {
  return (
    <div className="flex h-[1080px] w-[1920px] shrink-0 flex-col bg-[#f2f1ef] text-[14px] leading-[19px] text-[#444]">
      <div className="relative flex h-[22px] shrink-0 items-center justify-center border-t border-[#4a4944] bg-[#3c3b37] text-[#7b7972]">
        <div className="absolute left-[7px] top-[2px] flex gap-2">
          <WinButton glyph="x" dim />
          <WinButton glyph="-" dim />
          <WinButton glyph="m" dim />
        </div>
        <T w={189} className="font-bold">rqt_graph__RosGraph - rqt</T>
      </div>
      <div className="flex h-[31px] shrink-0 items-start pt-[4px]">
        <Ico className="mt-px size-4" box="0 0 16 16">
          <circle cx="8" cy="8" r="8" fill="#1492f5" />
          <circle cx="8" cy="8" r="2.600" stroke="#fff" strokeWidth="1.800" />
          <circle cx="8" cy="8" r="4.100" stroke="#fff" strokeWidth="1.200" strokeDasharray="1.600 1.600" />
        </Ico>
        <T w={82}>Node Graph</T>
        <div className="ml-auto flex items-center pr-[3px]">
          <span className="mr-[1px] flex h-[15px] w-[13px] items-center justify-center rounded-[4px] border border-[#b5b2ad] bg-[#e9e7e4]">D</span>
          <span className="flex size-4 items-center justify-center rounded-full bg-[#1c9bf6] text-[12px] text-white">?</span>
          <span className="ml-[13px]">-</span>
          <span className="ml-[8px]">O</span>
        </div>
      </div>
      <div className="flex h-[26px] shrink-0 gap-[8px] pl-[10px] pr-[10px]">
        <RqtBtn>
          <Ico className="h-3 w-3" box="0 0 12 12">
            <path d="M3 3 H7 A3.700 3.700 0 0 1 7 10.800 H3" stroke="#3c3c3c" strokeWidth="1.800" />
            <path d="M0 3 L4.500 0 V6 Z" fill="#3c3c3c" />
          </Ico>
        </RqtBtn>
        <div className="flex h-[25px] w-[416px] items-center justify-between rounded-[4px] border border-[#b0ada8] bg-linear-to-b from-white to-[#ebe9e7] pl-[5px] pr-[5px]">
          <T w={146}>Nodes/Topics (active)</T>
          <span className="flex flex-col gap-[5px]">
            <Caret className="h-1 rotate-180 text-[#666]" />
            <Caret className="h-1 text-[#666]" />
          </span>
        </div>
        <div className="flex h-[25px] w-[415px] items-center rounded-[4px] border border-[#a8a5a0] bg-white pl-[4px]">/</div>
        <div className="flex h-[25px] w-[416px] items-center rounded-[4px] border border-[#a8a5a0] bg-white pl-[4px]">/</div>
        <RqtBtn className="ml-auto">
          <Ico className="h-2.5 w-3" box="0 0 12 10">
            <path d="M0 0 H4.500 L6 1.500 H12 V10 H0 Z" fill="#4a4a4a" />
          </Ico>
        </RqtBtn>
        <RqtBtn><Floppy /></RqtBtn>
        <RqtBtn><Floppy /></RqtBtn>
        <RqtBtn>
          <Ico className="h-4 w-3" box="0 0 12 16">
            <rect width="12" height="16" fill="#1c9bf6" />
            <rect y="13" width="12" height="3" fill="#0c3c78" />
            <rect x="3.500" y="5" width="5" height="4" fill="#1c9bf6" stroke="#0c3c78" strokeWidth="1.400" />
          </Ico>
        </RqtBtn>
      </div>
      <div className="flex h-[70px] shrink-0 items-center pl-[27px]">
        <div className="w-[54px]"><T w={46}>Group:</T></div>
        <Opt on cell="w-[121px]" w={85}>Namespaces</Opt>
        <Opt on cell="w-[96px]" w={51}>Actions</Opt>
        <div className="h-10 w-px bg-[#bdbab5]" />
        <div className="ml-[16px] w-[44px]"><T w={36}>Hide:</T></div>
        <Opt cell="w-[109px]" w={73}>Dead sinks</Opt>
        <Opt cell="w-[110px]" w={74}>Leaf topics</Opt>
        <Opt on cell="w-[82px]" w={46}>Debug</Opt>
        <Opt cell="w-[129px]" w={86}>Unreachable</Opt>
        <div className="h-10 w-px bg-[#bdbab5]" />
        <Opt on cell="ml-[10px] w-[99px]" w={63}>Highlight</Opt>
        <Opt cell="w-[52px]" w={18}>Fit</Opt>
        <RqtBtn>
          <Ico className="h-3 w-3" box="0 0 12 12">
            <path d="M0.500 3 V0.500 H3 M9 0.500 H11.500 V3 M11.500 9 V11.500 H9 M3 11.500 H0.500 V9" stroke="#666" />
            <rect x="3" y="2.500" width="6" height="7" fill="#3c3c3c" />
          </Ico>
        </RqtBtn>
      </div>
      <div className="ml-[9px] h-[900px] w-[1902px] shrink-0 border border-[#bdbab5]">
        <Graph />
      </div>
      <div className="mt-[9px] border-t border-[#d4d1cc] shadow-[inset_0_1px_0_#fff]" />
    </div>
  );
}

export default function App() {
  return (
    <div className="flex h-[1080px] w-[3840px] overflow-hidden font-['Noto_Sans','Open_Sans',sans-serif]">
      <Gazebo />
      <Rqt />
    </div>
  );
}
